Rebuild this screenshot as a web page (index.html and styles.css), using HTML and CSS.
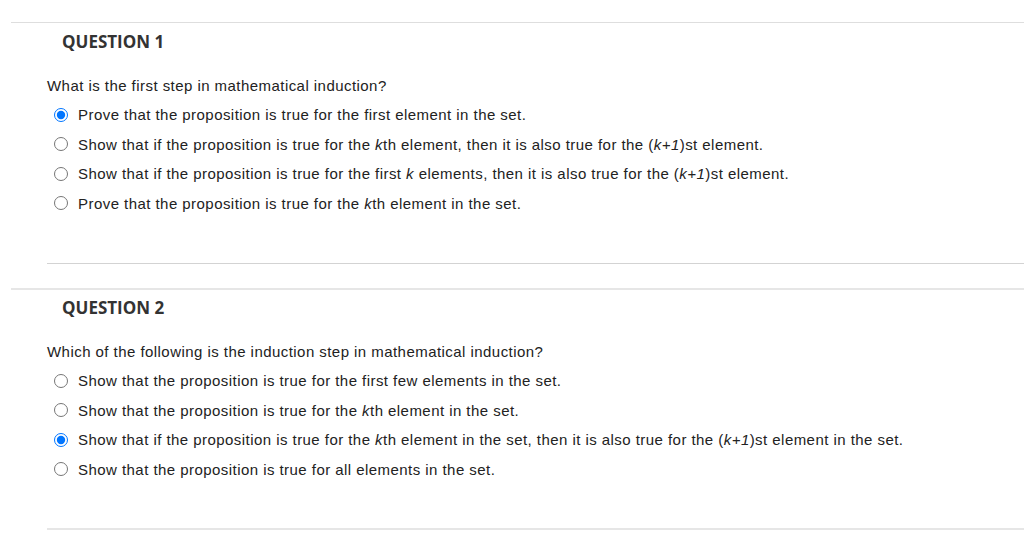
FILE: index.html
```html
<!DOCTYPE html>
<html lang="en">
<head>
<meta charset="utf-8">
<title>Questions</title>
<link rel="stylesheet" href="styles.css">
</head>
<body>
<div class="page">
  <section class="question">
    <h2 class="qhead">QUESTION 1</h2>
    <div class="qbody">
      <p class="qtext">What is the first step in mathematical induction?</p>
      <label class="opt"><input type="radio" name="q1" checked><span>Prove that the proposition is true for the first element in the set.</span></label>
      <label class="opt"><input type="radio" name="q1"><span>Show that if the proposition is true for the <i>k</i>th element, then it is also true for the (<i>k+1</i>)st element.</span></label>
      <label class="opt"><input type="radio" name="q1"><span>Show that if the proposition is true for the first <i>k</i> elements, then it is also true for the (<i>k+1</i>)st element.</span></label>
      <label class="opt"><input type="radio" name="q1"><span>Prove that the proposition is true for the <i>k</i>th element in the set.</span></label>
      <div class="sep"></div>
    </div>
  </section>
  <section class="question q2">
    <h2 class="qhead">QUESTION 2</h2>
    <div class="qbody">
      <p class="qtext">Which of the following is the induction step in mathematical induction?</p>
      <label class="opt"><input type="radio" name="q2"><span>Show that the proposition is true for the first few elements in the set.</span></label>
      <label class="opt"><input type="radio" name="q2"><span>Show that the proposition is true for the <i>k</i>th element in the set.</span></label>
      <label class="opt"><input type="radio" name="q2" checked><span>Show that if the proposition is true for the <i>k</i>th element in the set, then it is also true for the (<i>k+1</i>)st element in the set.</span></label>
      <label class="opt"><input type="radio" name="q2"><span>Show that the proposition is true for all elements in the set.</span></label>
      <div class="sep sep-light"></div>
    </div>
  </section>
</div>
</body>
</html>
```

FILE: styles.css
```css
html, body {
  margin: 0;
  padding: 0;
  background: #fff;
}

body {
  font-family: "Liberation Sans", Arial, sans-serif;
  font-size: 15px;
  letter-spacing: 0.45px;
  color: #222;
}

.page {
  padding-top: 22px;
}

.question {
  margin-left: 11px;
  border-top: 1px solid #dedede;
}

.q2 {
  margin-top: 24px;
  border-top: 2px solid #e6e6e6;
}

.qhead {
  margin: 0;
  padding: 8px 0 0 51px;
  font-family: "Open Sans", sans-serif;
  font-weight: 700;
  font-size: 17px;
  letter-spacing: 0;
  line-height: 22px;
  color: #333;
}

.q2 .qhead {
  padding-top: 7px;
}

.qbody {
  margin-left: 36px;
  padding-top: 18px;
}

.q2 .qbody {
  padding-top: 18px;
}

.qtext {
  margin: 0;
  height: 29.4px;
  line-height: 29.4px;
}

.opt {
  display: flex;
  align-items: center;
  height: 29.4px;
  line-height: 29.4px;
}

.opt input {
  margin: 0 10px 0 7px;
  width: 14px;
  height: 14px;
  accent-color: #0075ff;
}

.sep {
  margin-top: 45px;
  border-top: 1px solid #d3d3d3;
}

.sep-light {
  margin-top: 44px;
  border-top: 2px solid #e6e6e6;
}
```
